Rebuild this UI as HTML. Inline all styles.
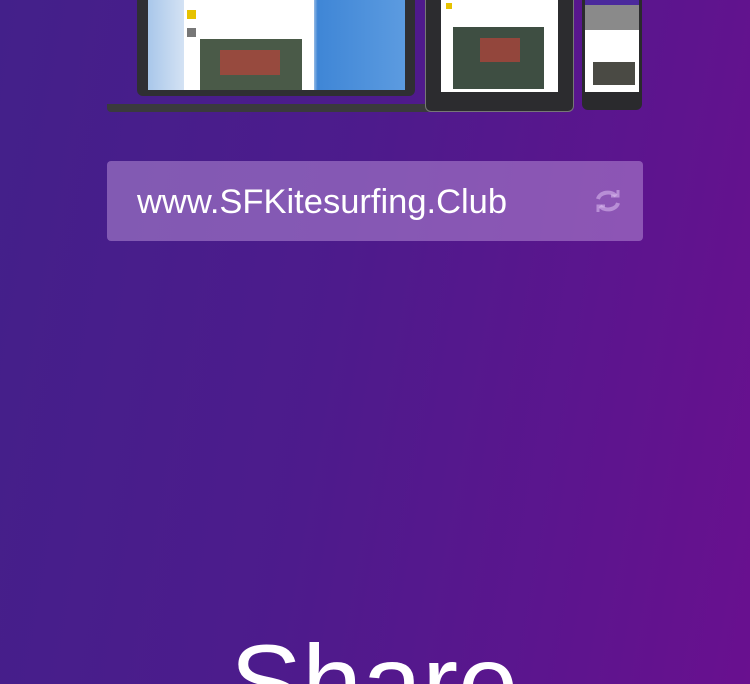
<!DOCTYPE html>
<html><head><meta charset="utf-8"><style>
html,body{margin:0;padding:0;overflow:hidden;width:750px;height:684px}
body{position:relative;font-family:"Liberation Sans",sans-serif;
background:linear-gradient(100deg,#43208a 0%,#4d1b8c 45%,#5e148e 80%,#69108f 100%);}
.a{position:absolute}
#w{position:absolute;left:0;top:0;width:750px;height:684px;overflow:hidden}
</style></head><body><div id="w">
<!-- laptop -->
<div class="a" style="left:137px;top:0;width:278px;height:96px;background:#2f2f33;border-radius:0 0 6px 6px"></div>
<div class="a" style="left:148px;top:0;width:257px;height:90px;background:linear-gradient(90deg,#a9c7ea,#e6eef8 20%,#f4f4f4 32%,#fff 50%,#f4f4f4 63%,#3f86d6 66%,#5c9be0 100%)"></div>
<div class="a" style="left:184px;top:0;width:130px;height:90px;background:#fff"></div>
<div class="a" style="left:200px;top:39px;width:102px;height:51px;background:#4a5a48"></div>
<div class="a" style="left:220px;top:50px;width:60px;height:25px;background:#b8433a;opacity:.7"></div>
<div class="a" style="left:187px;top:10px;width:9px;height:9px;background:#e6c200"></div>
<div class="a" style="left:187px;top:28px;width:9px;height:9px;background:#777"></div>
<div class="a" style="left:107px;top:104px;width:325px;height:8px;background:#3a3a3d;border-radius:0 0 4px 4px"></div>
<!-- tablet -->
<div class="a" style="left:425px;top:0;width:147px;height:111px;background:#2c2c2f;border-radius:0 0 6px 6px;border:1px solid #777;border-top:0"></div>
<div class="a" style="left:441px;top:0;width:117px;height:92px;background:#fff"></div>
<div class="a" style="left:453px;top:27px;width:91px;height:62px;background:#3e4e42"></div>
<div class="a" style="left:480px;top:38px;width:40px;height:24px;background:#b8433a;opacity:.7"></div>
<div class="a" style="left:446px;top:3px;width:6px;height:6px;background:#e6c200"></div>
<!-- phone -->
<div class="a" style="left:582px;top:0;width:60px;height:110px;background:#2a2a2d;border-radius:0 0 6px 6px"></div>
<div class="a" style="left:585px;top:0;width:54px;height:92px;background:#fff"></div>
<div class="a" style="left:585px;top:0;width:54px;height:5px;background:#4b2a9c"></div>
<div class="a" style="left:585px;top:5px;width:54px;height:25px;background:#8a8a8a"></div>
<div class="a" style="left:593px;top:62px;width:42px;height:23px;background:#4a4a44"></div>
<!-- url bar -->
<div class="a" style="left:107px;top:161px;width:536px;height:80px;background:rgba(190,150,220,.5);border-radius:4px"></div>
<div class="a" style="left:137px;top:181px;font-size:34.5px;color:#fff;line-height:42px">www.SFKitesurfing.Club</div>
<svg class="a" style="left:594px;top:187px" width="28" height="28" viewBox="0 0 28 28" fill="none" stroke="rgba(220,190,240,.55)" stroke-width="4">
<path d="M4 12a10 8 0 0 1 18-3"/><path d="M24 16a10 8 0 0 1-18 3"/><path d="M17 9h7V3" stroke-width="3"/><path d="M11 19H4v6" stroke-width="3"/></svg>
<!-- Share -->
<svg class="a" style="left:0;top:620px" width="750" height="64"><text x="230" y="100" font-family="Liberation Sans, sans-serif" font-size="108" fill="#fff">Share</text></svg>
</div></body></html>
